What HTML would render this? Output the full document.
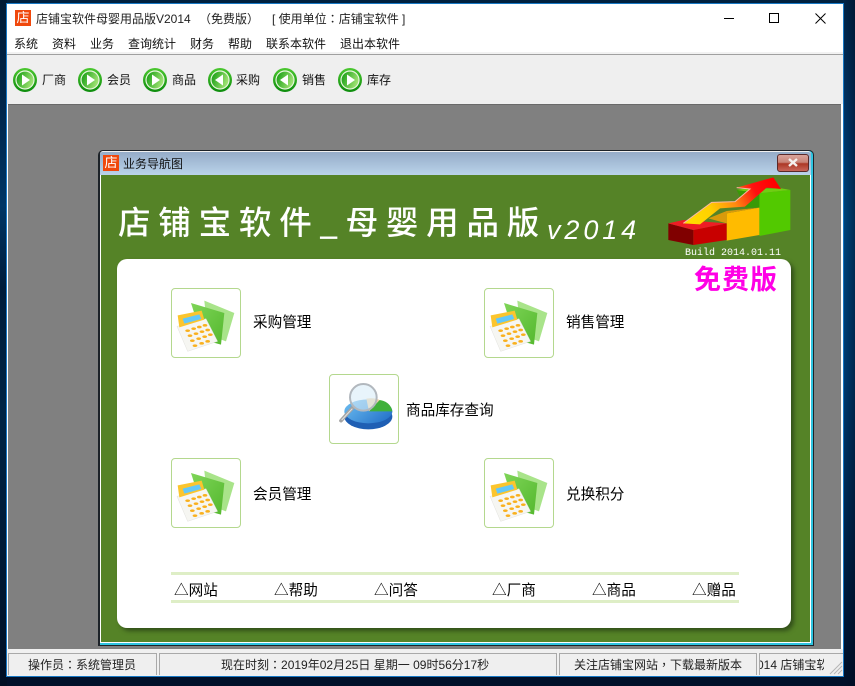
<!DOCTYPE html>
<html><head><meta charset="utf-8"><style>
html,body{margin:0;padding:0}
body{width:855px;height:686px;overflow:hidden;position:relative;background:#001a38;font-family:"Liberation Sans","Noto Sans CJK SC",sans-serif;font-size:12px;color:#111}
div,span,svg{position:absolute}
b{font-weight:inherit;font-family:"Noto Sans CJK TC",sans-serif}
.t{white-space:nowrap;line-height:16px}
.l{white-space:nowrap;font-family:"WenQuanYi Zen Hei","Noto Sans CJK SC",sans-serif;font-size:14.6px;line-height:18px;color:#000}
.box{width:68px;height:68px;background:#fff;border:1px solid #b4d88e;border-radius:4px}
.sp{top:653px;height:22px;background:#efefef;border:1px solid #a9a9a9;border-bottom:0;box-sizing:border-box}
.logo{background:#f0480c;color:#fff;font-size:13px;text-align:center;line-height:16px;width:16px;height:16px;overflow:hidden}
</style></head><body>
<svg width="0" height="0" style="left:0;top:0"><defs>
<linearGradient id="gb" x1="0" y1="0" x2="1" y2="0.4"><stop offset="0" stop-color="#0f9a0e"/><stop offset="1" stop-color="#9be070"/></linearGradient>
<linearGradient id="gr" x1="0" y1="0" x2="0" y2="1"><stop offset="0" stop-color="#4cc830"/><stop offset="1" stop-color="#0c8c0c"/></linearGradient>
<linearGradient id="fg" x1="0" y1="0" x2="1" y2="1"><stop offset="0" stop-color="#7fd558"/><stop offset="1" stop-color="#54b82e"/></linearGradient>
<linearGradient id="ar" x1="55" y1="145" x2="330" y2="20" gradientUnits="userSpaceOnUse"><stop offset="0" stop-color="#ffe000"/><stop offset=".3" stop-color="#ffd000"/><stop offset=".55" stop-color="#ff8a10"/><stop offset=".78" stop-color="#ff1010"/><stop offset="1" stop-color="#ff0000"/></linearGradient>
<linearGradient id="dg" x1="0" y1="0" x2="1" y2="0.6"><stop offset="0" stop-color="#6fc0f2"/><stop offset="1" stop-color="#2a78cc"/></linearGradient>
<symbol id="btn" viewBox="0 0 26 26"><circle cx="13" cy="13" r="12" fill="url(#gr)"/><circle cx="13" cy="13" r="9.6" fill="#e8f6de"/><circle cx="13" cy="13" r="8.4" fill="url(#gb)"/></symbol>
<symbol id="calc" viewBox="0 0 210 210">
<polygon points="100,38 190,75 165,160 110,140" fill="#a9e48a"/>
<polygon points="60,45 160,75 150,170 95,155" fill="url(#fg)"/>
<polygon points="18,115 105,92 140,160 50,190" fill="#f6f6f2" stroke="#d4d4d0"/>
<polygon points="20,82 92,68 100,95 25,118" fill="#fbc52e"/>
<polygon points="35,92 85,79 91,93 40,107" fill="#63c8f8"/>
<g fill="#f9b01e"><ellipse cx="50" cy="128" rx="7" ry="4"/><ellipse cx="68" cy="122" rx="7" ry="4"/><ellipse cx="85" cy="117" rx="7" ry="4"/><ellipse cx="102" cy="112" rx="7" ry="4"/><ellipse cx="57" cy="143" rx="7" ry="4"/><ellipse cx="75" cy="137" rx="7" ry="4"/><ellipse cx="93" cy="131" rx="7" ry="4"/><ellipse cx="110" cy="126" rx="7" ry="4"/><ellipse cx="64" cy="158" rx="7" ry="4"/><ellipse cx="83" cy="152" rx="7" ry="4"/><ellipse cx="101" cy="146" rx="7" ry="4"/><ellipse cx="118" cy="140" rx="7" ry="4"/><ellipse cx="72" cy="173" rx="7" ry="4"/><ellipse cx="92" cy="166" rx="7" ry="4"/><ellipse cx="110" cy="160" rx="7" ry="4"/></g>
</symbol>
<symbol id="mag" viewBox="0 0 204 210">
<ellipse cx="118" cy="128" rx="72" ry="38" fill="#1f5fb4"/>
<ellipse cx="118" cy="112" rx="72" ry="36" fill="url(#dg)"/>
<path d="M120 112L152 78Q185 84 190 112Z" fill="#3fb03a"/>
<path d="M120 112L112 74Q135 70 152 78Z" fill="#f2d2a4"/>
<line x1="72" y1="100" x2="36" y2="140" stroke="#a4a4a4" stroke-width="11" stroke-linecap="round"/>
<line x1="70" y1="104" x2="38" y2="138" stroke="#e4e4e4" stroke-width="3"/>
<circle cx="103" cy="70" r="40" fill="#d8ecf8" fill-opacity=".6" stroke="#b2b8be" stroke-width="6"/>
</symbol>
</defs></svg>

<!-- desktop -->
<div style="left:0;top:0;width:7px;height:686px;background:linear-gradient(180deg,#001a34 0,#002a52 20%,#003564 30%,#001c3a 42%,#002444 60%,#001a36 80%,#000f24 100%)"></div>
<div style="left:843px;top:0;width:12px;height:686px;background:linear-gradient(90deg,rgba(0,0,0,0) 0,rgba(0,10,30,.45) 100%),linear-gradient(180deg,#002448 0,#003a70 20%,#00477f 32%,#003d74 55%,#002c58 72%,#001838 90%,#001029 100%)"></div>
<div style="left:7px;top:0;width:836px;height:4px;background:#00213f"></div>
<div style="left:7px;top:677px;width:836px;height:9px;background:#001029"></div>

<!-- main window -->
<div style="left:6px;top:3px;width:838px;height:674px;background:#fff;border:1px solid #1778c4;box-sizing:border-box"></div>
<div class="logo" style="left:15px;top:10px">店</div>
<div class="t" style="left:36px;top:11px;color:#222">店铺宝软件母婴用品版V2014 <b style="font-family:inherit;margin-left:5px">（免费版）</b></div>
<div class="t" style="left:272px;top:11px;color:#222">[ 使用单位<b>：</b>店铺宝软件 ]</div>
<div style="left:724px;top:18px;width:10px;height:1px;background:#000"></div>
<div style="left:769px;top:13px;width:8px;height:8px;border:1px solid #000"></div>
<svg style="left:815px;top:13px" width="11" height="11"><path d="M0.5 0.5L10.5 10.5M10.5 0.5L0.5 10.5" stroke="#000" fill="none"/></svg>

<div class="t" style="left:14px;top:36px">系统</div>
<div class="t" style="left:52px;top:36px">资料</div>
<div class="t" style="left:90px;top:36px">业务</div>
<div class="t" style="left:128px;top:36px">查询统计</div>
<div class="t" style="left:190px;top:36px">财务</div>
<div class="t" style="left:228px;top:36px">帮助</div>
<div class="t" style="left:266px;top:36px">联系本软件</div>
<div class="t" style="left:340px;top:36px">退出本软件</div>

<div style="left:7px;top:52px;width:836px;height:2px;background:#f2f2f2"></div>
<div style="left:7px;top:54px;width:836px;height:1px;background:#a0a0a0"></div>
<div style="left:7px;top:55px;width:836px;height:49px;background:#efefef"></div>

<svg style="left:12px;top:67px" width="26" height="26"><use href="#btn"/><polygon points="10,7.5 18,13 10,18.5" fill="#fff"/></svg>
<svg style="left:77px;top:67px" width="26" height="26"><use href="#btn"/><polygon points="10,7.5 18,13 10,18.5" fill="#fff"/></svg>
<svg style="left:142px;top:67px" width="26" height="26"><use href="#btn"/><polygon points="10,7.5 18,13 10,18.5" fill="#fff"/></svg>
<svg style="left:207px;top:67px" width="26" height="26"><use href="#btn"/><polygon points="16,7.5 8,13 16,18.5" fill="#fff"/></svg>
<svg style="left:272px;top:67px" width="26" height="26"><use href="#btn"/><polygon points="16,7.5 8,13 16,18.5" fill="#fff"/></svg>
<svg style="left:337px;top:67px" width="26" height="26"><use href="#btn"/><polygon points="10,7.5 18,13 10,18.5" fill="#fff"/></svg>
<div class="t" style="left:42px;top:72px">厂商</div>
<div class="t" style="left:107px;top:72px">会员</div>
<div class="t" style="left:172px;top:72px">商品</div>
<div class="t" style="left:236px;top:72px">采购</div>
<div class="t" style="left:302px;top:72px">销售</div>
<div class="t" style="left:367px;top:72px">库存</div>

<!-- MDI area -->
<div style="left:8px;top:104px;width:833px;height:545px;background:#808080;border-top:1px solid #696969;box-sizing:border-box"></div>

<!-- child -->
<div style="left:98px;top:150px;width:716px;height:496px;background:#1c2228;border-radius:5px 5px 0 0"></div>
<div style="left:100px;top:151px;width:713px;height:494px;background:#2ec4e0;border-radius:4px 4px 0 0"></div>
<div style="left:100px;top:151px;width:711px;height:24px;background:linear-gradient(180deg,#95acc8,#bad3ea);border-top:1px solid #f0f0f0;box-sizing:border-box;border-radius:3px 3px 0 0"></div>
<div class="logo" style="left:103px;top:155px">店</div>
<div class="t" style="left:123px;top:156px;color:#111">业务导航图</div>
<div style="left:777px;top:154px;width:30px;height:16px;border:1px solid #5a2a2a;border-radius:3px;background:linear-gradient(180deg,#d9a49c 0,#c98478 45%,#ac3826 55%,#c9665a 100%)"></div>
<svg style="left:787px;top:158px" width="12" height="9"><path d="M2 1L10 8M10 1L2 8" stroke="#f4f0ee" stroke-width="2.4"/></svg>

<div style="left:100px;top:175px;width:711px;height:468px;background:#fff"></div>
<div style="left:101px;top:175px;width:709px;height:467px;background:#558327"></div>

<div style="left:118px;top:199px;color:#fff;font-family:'Noto Sans CJK SC',sans-serif;font-size:32.5px;font-weight:500;line-height:44px;letter-spacing:7.8px;white-space:nowrap">店铺宝软件_母婴用品版</div>
<div style="left:547px;top:213px;color:#fff;font-family:'Liberation Sans',sans-serif;font-style:italic;font-size:27px;line-height:34px;letter-spacing:3.9px;white-space:nowrap">v2014</div>

<svg style="left:665px;top:175px" width="130" height="80" viewBox="0 0 390 240">
<polygon points="283,55 376,45 376,165 283,183" fill="#52c900"/>
<polygon points="215,45 240,40 350,40 376,45 283,55" fill="#6fcf12"/>
<polygon points="215,45 283,55 283,98 240,98" fill="#389a06"/>
<polygon points="185,115 283,98 283,180 185,197" fill="#ffbb00"/>
<polygon points="130,130 185,108 283,98 185,115 185,145" fill="#d89a0c"/>
<polygon points="10,145 85,165 85,210 10,195" fill="#800000"/>
<polygon points="85,165 185,145 185,195 85,210" fill="#c80000"/>
<polygon points="10,145 55,135 185,145 85,165" fill="#ee1c24"/>
<polygon points="55,145 140,82 210,80 255,42 215,38 325,7 348,42 305,38 240,95 165,100 105,148" fill="url(#ar)"/>
<polyline points="55,145 140,82 210,80 255,42 215,38" fill="none" stroke="#f8b8a8" stroke-width="3"/>
</svg>
<div style="left:685px;top:247px;color:#fff;font-family:'Liberation Mono',monospace;font-size:10px;line-height:13px;white-space:nowrap">Build 2014.01.11</div>

<div style="left:117px;top:259px;width:674px;height:369px;background:#fff;border-radius:10px;box-shadow:3px 3px 4px #33501a"></div>
<div style="left:694px;top:260px;color:#ff00e6;font-family:'Noto Sans CJK SC',sans-serif;font-weight:700;font-size:27px;line-height:36px;letter-spacing:1px;white-space:nowrap">免费版</div>

<div class="box" style="left:171px;top:288px"><svg style="left:-1px;top:-1px" width="70" height="70"><use href="#calc"/></svg></div>
<div class="box" style="left:484px;top:288px"><svg style="left:-1px;top:-1px" width="70" height="70"><use href="#calc"/></svg></div>
<div class="box" style="left:329px;top:374px"><svg style="left:-1px;top:-1px" width="68" height="70"><use href="#mag"/></svg></div>
<div class="box" style="left:171px;top:458px"><svg style="left:-1px;top:-1px" width="70" height="70"><use href="#calc"/></svg></div>
<div class="box" style="left:484px;top:458px"><svg style="left:-1px;top:-1px" width="70" height="70"><use href="#calc"/></svg></div>

<div class="l" style="left:253px;top:313px">采购管理</div>
<div class="l" style="left:566px;top:313px">销售管理</div>
<div class="l" style="left:406px;top:401px">商品库存查询</div>
<div class="l" style="left:253px;top:485px">会员管理</div>
<div class="l" style="left:566px;top:485px">兑换积分</div>

<div style="left:171px;top:572px;width:568px;height:3px;background:#deeec6"></div>
<div style="left:171px;top:600px;width:568px;height:3px;background:#deeec6"></div>
<div class="l" style="left:174px;top:581px">△网站</div>
<div class="l" style="left:274px;top:581px">△帮助</div>
<div class="l" style="left:374px;top:581px">△问答</div>
<div class="l" style="left:492px;top:581px">△厂商</div>
<div class="l" style="left:592px;top:581px">△商品</div>
<div class="l" style="left:692px;top:581px">△赠品</div>

<!-- status bar -->
<div style="left:7px;top:649px;width:836px;height:27px;background:#f0f0f0"></div>
<div class="sp" style="left:8px;width:149px"></div>
<div class="sp" style="left:159px;width:398px"></div>
<div class="sp" style="left:559px;width:198px"></div>
<div class="sp" style="left:759px;width:84px;overflow:hidden;border-right:0"><span class="t" style="left:-3px;top:3px;color:#222;white-space:nowrap">014 店铺宝软</span></div>
<div style="left:824px;top:654px;width:19px;height:21px;background:#efefef"></div>
<svg style="left:829px;top:661px" width="14" height="14"><path d="M13 1L1 13M13 5L5 13M13 9L9 13" stroke="#b5b5b5" fill="none"/></svg>
<div class="t" style="left:28px;top:657px;color:#222">操作员<b>：</b>系统管理员</div>
<div class="t" style="left:221px;top:657px;color:#222">现在时刻<b>：</b>2019年02月25日 星期一 09时56分17秒</div>
<div class="t" style="left:574px;top:657px;color:#222">关注店铺宝网站<b>，</b>下载最新版本</div>
</body></html>
